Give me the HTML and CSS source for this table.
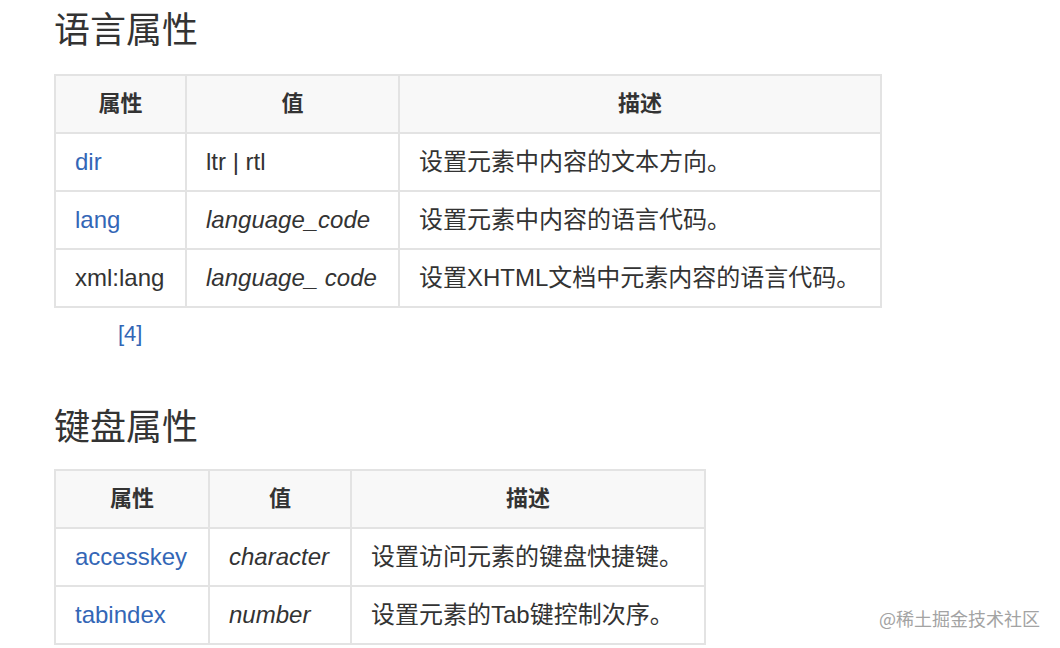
FILE: index.html
```html
<!DOCTYPE html>
<html lang="zh-CN">
<head>
<meta charset="utf-8">
<title>语言属性</title>
<link rel="stylesheet" href="styles.css">
</head>
<body>
<main class="page">
  <h2 class="heading heading-first">语言属性</h2>
  <table class="attr-table table-lang">
    <colgroup>
      <col class="c-lang-1"><col class="c-lang-2"><col class="c-lang-3">
    </colgroup>
    <thead>
      <tr><th>属性</th><th>值</th><th>描述</th></tr>
    </thead>
    <tbody>
      <tr><td><a class="link" href="#">dir</a></td><td>ltr | rtl</td><td>设置元素中内容的文本方向。</td></tr>
      <tr><td><a class="link" href="#">lang</a></td><td><i>language_code</i></td><td>设置元素中内容的语言代码。</td></tr>
      <tr><td>xml:lang</td><td><i>language_ code</i></td><td>设置XHTML文档中元素内容的语言代码。</td></tr>
    </tbody>
  </table>
  <p class="ref"><a class="link" href="#">[4]</a></p>

  <h2 class="heading heading-second">键盘属性</h2>
  <table class="attr-table table-key">
    <colgroup>
      <col class="c-key-1"><col class="c-key-2"><col class="c-key-3">
    </colgroup>
    <thead>
      <tr><th>属性</th><th>值</th><th>描述</th></tr>
    </thead>
    <tbody>
      <tr><td><a class="link" href="#">accesskey</a></td><td><i>character</i></td><td>设置访问元素的键盘快捷键。</td></tr>
      <tr><td><a class="link" href="#">tabindex</a></td><td><i>number</i></td><td>设置元素的Tab键控制次序。</td></tr>
    </tbody>
  </table>
</main>
<div class="watermark">@稀土掘金技术社区</div>
</body>
</html>
```

FILE: styles.css
```css
html, body {
  margin: 0;
  padding: 0;
  background: #ffffff;
}

body {
  font-family: "Liberation Sans", "Noto Sans CJK SC", sans-serif;
  color: #333333;
  width: 1060px;
  height: 648px;
  overflow: hidden;
  position: relative;
}

.page {
  padding: 0 0 0 54px;
}

.heading {
  font-size: 36px;
  font-weight: normal;
  line-height: 40px;
  margin: 0;
  color: #333333;
}

.heading-first {
  margin-top: 11px;
  margin-bottom: 23px;
}

.heading-second {
  margin-top: 0;
  margin-bottom: 21px;
}

.attr-table {
  border-collapse: collapse;
  table-layout: fixed;
  font-size: 24px;
}

.table-lang { width: 828px; }
.table-key { width: 652px; }

.c-lang-1 { width: 131px; }
.c-lang-2 { width: 213px; }
.c-lang-3 { width: 482px; }

.c-key-1 { width: 154px; }
.c-key-2 { width: 142px; }
.c-key-3 { width: 354px; }

.attr-table th,
.attr-table td {
  border: 2px solid #e3e3e3;
  padding: 15px 19px;
  line-height: 26px;
  white-space: nowrap;
}

.attr-table th {
  background: #f8f8f8;
  font-weight: bold;
  font-size: 22px;
  text-align: center;
  color: #333333;
}

.attr-table td {
  text-align: left;
}

.attr-table i {
  font-style: italic;
}

.link {
  color: #3366b6;
  text-decoration: none;
}

.ref {
  margin: 0;
  padding: 12px 0 0 64px;
  font-size: 22px;
  line-height: 28px;
  height: 88px;
}

.watermark {
  position: absolute;
  right: 20px;
  bottom: 19px;
  font-size: 18px;
  line-height: 22px;
  color: #a3a3a3;
  font-family: "Noto Sans CJK SC", sans-serif;
}
```
